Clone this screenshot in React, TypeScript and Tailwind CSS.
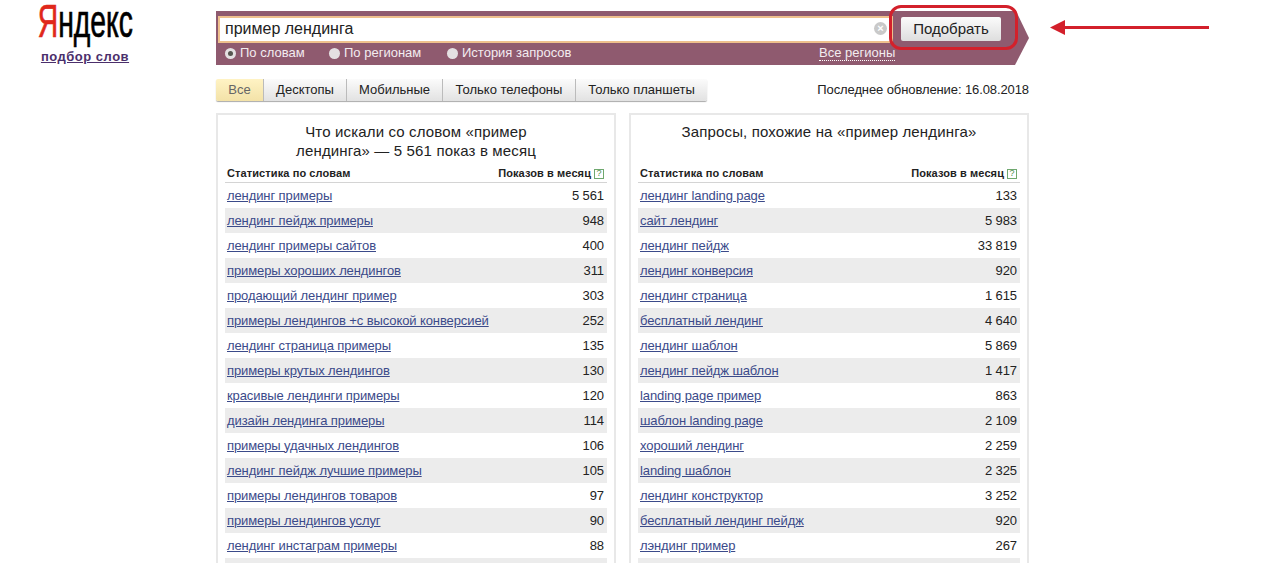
const TABS = [
  { label: 'Все', width: 'w-[48px]' },
  { label: 'Десктопы', width: 'w-[83px]' },
  { label: 'Мобильные', width: 'w-[96px]' },
  { label: 'Только телефоны', width: 'w-[133px]' },
  { label: 'Только планшеты', width: 'w-[131px]' },
]

const LEFT: Array<[string, string]> = [
  ['лендинг примеры', '5 561'],
  ['лендинг пейдж примеры', '948'],
  ['лендинг примеры сайтов', '400'],
  ['примеры хороших лендингов', '311'],
  ['продающий лендинг пример', '303'],
  ['примеры лендингов +с высокой конверсией', '252'],
  ['лендинг страница примеры', '135'],
  ['примеры крутых лендингов', '130'],
  ['красивые лендинги примеры', '120'],
  ['дизайн лендинга примеры', '114'],
  ['примеры удачных лендингов', '106'],
  ['лендинг пейдж лучшие примеры', '105'],
  ['примеры лендингов товаров', '97'],
  ['примеры лендингов услуг', '90'],
  ['лендинг инстаграм примеры', '88'],
  ['', ''],
]

const RIGHT: Array<[string, string]> = [
  ['лендинг landing page', '133'],
  ['сайт лендинг', '5 983'],
  ['лендинг пейдж', '33 819'],
  ['лендинг конверсия', '920'],
  ['лендинг страница', '1 615'],
  ['бесплатный лендинг', '4 640'],
  ['лендинг шаблон', '5 869'],
  ['лендинг пейдж шаблон', '1 417'],
  ['landing page пример', '863'],
  ['шаблон landing page', '2 109'],
  ['хороший лендинг', '2 259'],
  ['landing шаблон', '2 325'],
  ['лендинг конструктор', '3 252'],
  ['бесплатный лендинг пейдж', '920'],
  ['лэндинг пример', '267'],
  ['', ''],
]

function Radio({ label, checked, className }: { label: string; checked?: boolean; className: string }) {
  return (
    <div className={`flex items-center gap-[4px] ${className}`}>
      <span className="flex h-[11px] w-[11px] items-center justify-center rounded-full bg-[#e4e0e2]">
        {checked && <span className="h-[5px] w-[5px] rounded-full bg-[#55554f]" />}
      </span>
      <span>{label}</span>
    </div>
  )
}

function StatTable({ title, rows }: { title: React.ReactNode; rows: Array<[string, string]> }) {
  return (
    <div className="h-[460px] w-[400px] overflow-hidden border-2 border-b-0 border-[#e8e8e8] px-[7px]">
      <h2 className="flex h-[47px] items-start justify-center pt-[7px] text-center text-[15px] leading-[19px] tracking-[0.15px] text-[#222]">
        <span>{title}</span>
      </h2>
      <div className="flex h-[21px] items-center justify-between border-b border-[#d4d4d4] pt-[3px] pl-[2px] pr-[3px] text-[11px] font-bold tracking-[0.1px] text-[#222]">
        <span>Статистика по словам</span>
        <span className="flex items-center gap-[3px]">
          Показов в месяц
          <span className="flex h-[10px] w-[10px] items-center justify-center border border-[#6fa86f] text-[9px] leading-none font-normal text-[#4d8f4d]">
            ?
          </span>
        </span>
      </div>
      {rows.map(([query, count], i) => (
        <div
          key={i}
          className={`flex h-[25px] items-center justify-between pl-[2px] pr-[3px] text-[13px] tracking-[-0.1px] ${i % 2 ? 'bg-[#ececec]' : ''}`}
        >
          <a className="text-[#3b4a8a] underline">{query}</a>
          <span className="text-[#222]">{count}</span>
        </div>
      ))}
    </div>
  )
}

export default function App() {
  return (
    <div className="relative flex h-[563px] w-[1270px] overflow-hidden bg-white font-['Liberation_Sans',Arial,sans-serif]">
      <div className="flex w-[216px] shrink-0 flex-col items-center pr-[46px]">
        <div className="h-[42px] origin-center scale-x-[0.615] text-[46px] leading-[42px] whitespace-nowrap text-black [-webkit-text-stroke:0.7px_currentColor]">
          <span className="text-[#e0281b]">Я</span>ндекс
        </div>
        <a className="mt-[5px] text-[13px] font-bold tracking-[0.5px] text-[#4b2f6b] underline">подбор слов</a>
      </div>

      <div className="w-[813px] shrink-0 pt-[11px]">
        <div className="relative h-[54px] w-[813px] bg-[#8f5a6f] [clip-path:polygon(0_0,800px_0,813px_27px,799px_54px,0_54px)]">
          <div className="flex h-[33px] pt-[5px] pl-[2px]">
            <div className="flex h-[27px] w-[675px] items-center justify-between border-2 border-[#eec08d] bg-white pb-[2px] pl-[5px] pr-[4px] text-[16px] text-[#222]">
              <span>пример лендинга</span>
              <span className="flex h-[13px] w-[13px] items-center justify-center rounded-full bg-[#c9c9c9] text-[11px] leading-none font-bold text-white">
                ×
              </span>
            </div>
            <button className="ml-[8px] mt-[1px] h-[24px] w-[100px] rounded-[2px] bg-gradient-to-b from-[#fbfbfb] to-[#dedede] text-[15px] text-[#222]">
              Подобрать
            </button>
          </div>
          <div className="flex h-[18px] items-center text-[13px] text-[#f3ecef]">
            <Radio label="По словам" checked className="ml-[9px] w-[104px]" />
            <Radio label="По регионам" className="w-[118px]" />
            <Radio label="История запросов" className="w-[372px]" />
            <a className="border-b border-dotted border-white leading-[15px]">Все регионы</a>
          </div>
        </div>

        <div className="mt-[14px] flex h-[22px] items-center justify-between">
          <div className="flex h-[22px] overflow-hidden rounded-[2px] text-[13px] shadow-[0_1px_1px_#aaa]">
            {TABS.map((tab, i) => (
              <div
                key={tab.label}
                className={`flex items-center justify-center border-r border-[#bbb] last:border-r-0 ${tab.width} ${
                  i === 0
                    ? 'bg-gradient-to-b from-[#fff3c4] to-[#f3e2a8] text-[#666]'
                    : 'bg-gradient-to-b from-[#fbfbfb] to-[#e2e2e2] text-[#222]'
                }`}
              >
                {tab.label}
              </div>
            ))}
          </div>
          <span className="text-[13px] tracking-[-0.1px] text-[#222]">Последнее обновление: 16.08.2018</span>
        </div>

        <div className="mt-[12px] flex justify-between">
          <StatTable title={<>Что искали со словом «пример<br />лендинга» — 5 561 показ в месяц</>} rows={LEFT} />
          <StatTable title="Запросы, похожие на «пример лендинга»" rows={RIGHT} />
        </div>
      </div>

      {/* annotation over the screenshot */}
      <div className="absolute top-[5px] left-[889px] h-[45px] w-[129px] rounded-[12px] border-[3px] border-[#d3202b]" />
      <svg className="absolute top-[19px] left-[1050px]" width="160" height="17" viewBox="0 0 160 17">
        <path d="M0 8.5 L15 1 L15 7 L159 7 L159 10 L15 10 L15 16 Z" fill="#d3202b" />
      </svg>
    </div>
  )
}
